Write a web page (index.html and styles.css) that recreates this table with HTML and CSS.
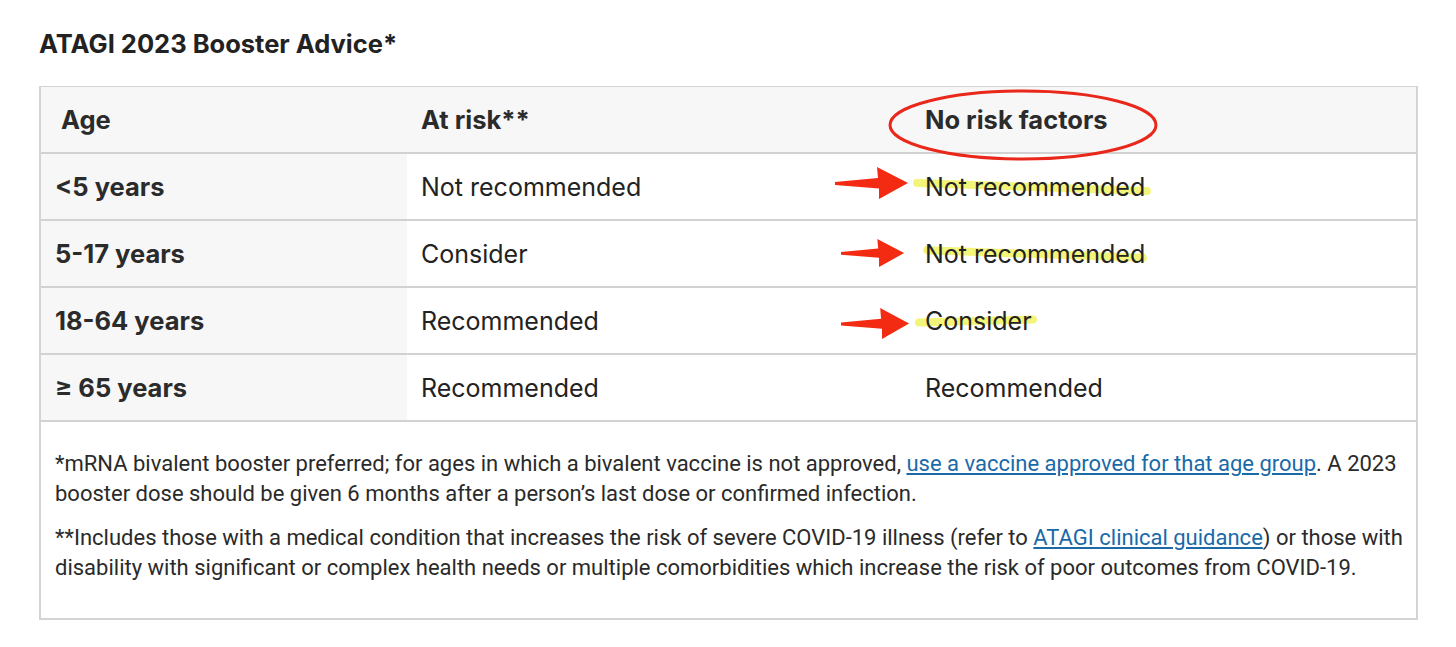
FILE: index.html
```html
<!DOCTYPE html>
<html>
<head>
<meta charset="utf-8">
<link rel="stylesheet" href="styles.css">
</head>
<body>
<div class="page">
  <h2 class="title">ATAGI 2023 Booster Advice*</h2>
  <div class="box">
    <table class="advice">
      <colgroup><col class="c1"><col class="c2"><col class="c3"></colgroup>
      <thead>
        <tr>
          <th class="age-h">Age</th>
          <th>At risk**</th>
          <th class="annot">No risk factors
            <svg class="ellipse" width="272" height="74" viewBox="0 0 272 74"><ellipse cx="136" cy="37" rx="133" ry="34" fill="none" stroke="#e9281b" stroke-width="3"/></svg>
          </th>
        </tr>
      </thead>
      <tbody>
        <tr>
          <th>&lt;5 years</th>
          <td>Not recommended</td>
          <td class="annot">
            <svg class="arrow a1" viewBox="0 0 74 34" preserveAspectRatio="none"><path d="M0 16 L43 12 L42 1 L73 17 L44 33 L44 22.5 L0 19 Z" fill="#f22b12"/></svg>
            <span class="hl h1"></span>
            <span class="txt">Not recommended</span>
          </td>
        </tr>
        <tr>
          <th>5-17 years</th>
          <td>Consider</td>
          <td class="annot">
            <svg class="arrow a2" viewBox="0 0 74 34" preserveAspectRatio="none"><path d="M0 16 L43 12 L42 1 L73 17 L44 33 L44 22.5 L0 19 Z" fill="#f22b12"/></svg>
            <span class="hl h2"></span>
            <span class="txt">Not recommended</span>
          </td>
        </tr>
        <tr>
          <th>18-64 years</th>
          <td>Recommended</td>
          <td class="annot">
            <svg class="arrow a3" viewBox="0 0 74 34" preserveAspectRatio="none"><path d="M0 16 L43 12 L42 1 L73 17 L44 33 L44 22.5 L0 19 Z" fill="#f22b12"/></svg>
            <span class="hl h3"></span>
            <span class="txt">Consider</span>
          </td>
        </tr>
        <tr>
          <th>≥ 65 years</th>
          <td>Recommended</td>
          <td>Recommended</td>
        </tr>
      </tbody>
    </table>
    <div class="notes">
      <p>*mRNA bivalent booster preferred; for ages in which a bivalent vaccine is not approved, <a href="#">use a vaccine approved for that age group</a>. A 2023 booster dose should be given 6 months after a person’s last dose or confirmed infection.</p>
      <p>**Includes those with a medical condition that increases the risk of severe COVID-19 illness (refer to <a href="#">ATAGI clinical guidance</a>) or those with disability with significant or complex health needs or multiple comorbidities which increase the risk of poor outcomes from COVID-19.</p>
    </div>
  </div>
</div>
</body>
</html>
```

FILE: styles.css
```css
* { box-sizing: border-box; }
html, body { margin: 0; padding: 0; background: #fff; }
body { font-family: Inter, "Liberation Sans", sans-serif; color: #222; }
.page { padding: 29px 39px 0 39px; width: 1456px; }
.title {
  margin: 0 0 27px 0;
  font-size: 25.5px;
  font-weight: 700;
  line-height: 30px;
  color: #222;
}
.box {
  width: 1379px;
  border: 2px solid #d4d4d4;
  border-top-width: 1px;
}
.advice {
  width: 100%;
  border-collapse: collapse;
  table-layout: fixed;
}
.c1 { width: 366px; }
.c2 { width: 504px; }
.advice th, .advice td {
  height: 67px;
  padding: 0 14px;
  text-align: left;
  font-size: 25px;
  line-height: 30px;
  border-bottom: 2px solid #d2d2d2;
  vertical-align: middle;
  color: #222;
}
.advice td { font-weight: 400; }
.advice th { font-weight: 700; color: #2b2b2b; font-size: 25.5px; }
.advice thead th { background: #f7f7f7; height: 66px; }
.advice thead .age-h { padding-left: 20px; }
.advice tbody th { background: #f7f7f7; }
.annot { position: relative; }
.ellipse { position: absolute; left: -24px; top: 1px; }
.arrow { position: absolute; }
.a1 { left: -76px; top: 12px; width: 74px; height: 34px; }
.a2 { left: -70px; top: 17px; width: 64px; height: 30px; }
.a3 { left: -70px; top: 19px; width: 69px; height: 33px; }
.hl {
  position: absolute;
  height: 8px;
  border-radius: 4px;
  background: rgba(238, 240, 70, 0.72);
}
.h1 { left: 2px; width: 238px; top: 29px; transform: rotate(2deg); }
.h2 { left: 12px; width: 224px; top: 29px; transform: rotate(2deg); }
.h3 { left: 4px; width: 122px; top: 29px; transform: rotate(-1.5deg); }
.txt { position: relative; }
.notes { padding: 27px 4px 24px 14px; height: 196px; }
.notes p {
  margin: 0 0 14px 0;
  font-family: Roboto, "Liberation Sans", sans-serif;
  font-size: 22px;
  line-height: 30px;
  color: #2a2a2a;
}
.notes a { color: #1a6aa8; text-decoration: underline; }
```
